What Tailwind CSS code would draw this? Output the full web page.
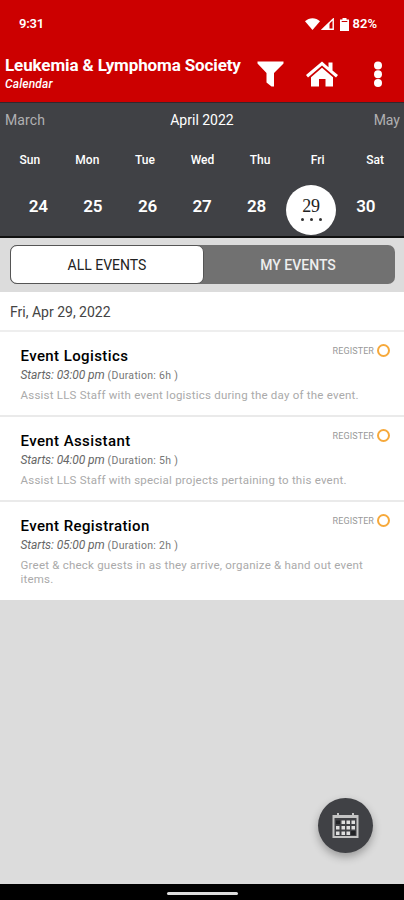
<!DOCTYPE html>
<html lang="en">
  <head>
    <meta charset="UTF-8" />
    <meta name="viewport" content="width=device-width, initial-scale=1.0" />
    <title>Calendar</title>
    <script src="https://cdn.jsdelivr.net/npm/@tailwindcss/browser@4"></script>
  </head>
  <body class="h-[900px] w-[404px] overflow-hidden bg-[#dcdcdc] font-['Roboto',sans-serif] flex flex-col">
    <!-- Header -->
    <header class="h-[102px] bg-[#cc0000] text-white">
      <div class="h-12 pl-[19px] pr-[27px] flex items-center justify-between text-[13px] font-semibold">
        <span class="tracking-[-0.2px]">9:31</span>
        <div class="flex items-center">
          <svg class="w-[15px] h-3" viewBox="0 0 15 12" fill="currentColor"><path d="M0 3.2C4.4-.8 10.600-.8 15 3.200L7.500 12z" /></svg>
          <svg class="w-[13px] h-3 ml-px" viewBox="0 0 13 12"><path d="M12.200 1v10.200H1.500z" fill="none" stroke="currentColor" stroke-width="1.400" /><path d="M8.500 4v7H1.500z" fill="currentColor" /></svg>
          <svg class="w-[9px] h-[13px] ml-[6px]" viewBox="0 0 9 13"><path d="M2.500 0h4v1.500H9V13H0V1.500h2.500z" fill="currentColor" /><path d="M1.700 3.500h5.600" stroke="#cc0000" stroke-width="1" /></svg>
          <span class="ml-[4px]">82%</span>
        </div>
      </div>
      <div class="h-[54px] pl-[5px] flex">
        <div class="w-[252px] pt-[7px]">
          <h1 class="text-[17px] leading-5 font-bold whitespace-nowrap tracking-[-0.12px]">Leukemia &amp; Lymphoma Society</h1>
          <p class="text-xs leading-[18px] font-medium italic tracking-[0.15px]">Calendar</p>
        </div>
        <svg class="w-[27px] h-[26px] mt-[13px]" viewBox="0 0 27 26" fill="currentColor"><path d="M.500.500h26v2L17 12v13.500h-2.500L9.500 21.500V12L.500 2.500z" /></svg>
        <svg class="w-8 h-[26px] mt-[13px] ml-[22px]" viewBox="0 0 32 26" fill="currentColor"><path d="M16 .500l6.500 5.700V1.500h4v8L32 14l-2 2.500L16 4.500 2 16.500 0 14z" /><path d="M16 6.700l11 9.500V25.500h-7.500V18h-6.500v7.500H5V16.200z" /></svg>
        <svg class="w-2 h-[26px] mt-[13px] ml-[36px]" viewBox="0 0 8 26" fill="currentColor"><circle cx="4" cy="4.500" r="4" /><circle cx="4" cy="13.200" r="4" /><circle cx="4" cy="21.900" r="4" /></svg>
      </div>
    </header>

    <!-- Week calendar -->
    <section class="h-[136px] bg-[#404145] border-t border-t-[#33272d] border-b-2 border-b-[#111111] text-white">
      <div class="h-[34px] px-[5px] grid grid-cols-3 items-center text-sm">
        <span class="text-[#b0b0b2] tracking-[0.1px]">March</span>
        <span class="text-center whitespace-nowrap">April 2022</span>
        <span class="text-right text-[#b0b0b2] -mr-px">May</span>
      </div>
      <div class="h-[45px] pl-px grid grid-cols-7 items-center text-center text-xs font-medium">
        <span>Sun</span>
        <span>Mon</span>
        <span>Tue</span>
        <span>Wed</span>
        <span>Thu</span>
        <span>Fri</span>
        <span>Sat</span>
      </div>
      <div class="h-[54px] px-[11px] grid grid-cols-7 text-center text-[17px] leading-[48px] font-semibold tracking-[-0.2px]">
        <span>24</span>
        <span>25</span>
        <span>26</span>
        <span>27</span>
        <span>28</span>
        <div class="relative size-[50px] mt-[3px] mx-auto rounded-full bg-white text-[#222222] font-['Liberation_Serif',serif] font-normal text-[18px] leading-[43px]">
          29
          <div class="absolute inset-x-0 top-[33px] flex justify-center gap-[6px]">
            <i class="size-[3px] rounded-full bg-[#333333]"></i>
            <i class="size-[3px] rounded-full bg-[#333333]"></i>
            <i class="size-[3px] rounded-full bg-[#333333]"></i>
          </div>
        </div>
        <span>30</span>
      </div>
    </section>

    <!-- Tabs -->
    <div class="h-[54px] pt-[7px] pl-[10px] pr-[9px]">
      <div class="h-[39px] flex rounded-[7px] bg-[#717171] text-sm text-center leading-[38px]">
        <button class="w-[194px] rounded-[7px] border border-[#555555] bg-white text-[#222222]">ALL EVENTS</button>
        <button class="flex-1 pr-[3px] text-[#eeeeee] font-medium">MY EVENTS</button>
      </div>
    </div>

    <!-- Events -->
    <main class="bg-white">
      <div class="h-10 pl-[10px] border-b-2 border-[#eeeeee] text-sm leading-[40px] text-[#444444]">Fri, Apr 29, 2022</div>
      <article class="h-[85px] pt-[14px] pl-[20.500px] pr-[14px] border-b-2 border-[#eaeaea]">
        <div class="flex justify-between">
          <h2 class="text-[15px] leading-5 font-medium text-black tracking-[0.4px]">Event Logistics</h2>
          <div class="h-[9px] flex items-center gap-[3px] text-[9px] text-[#999999]"><span class="pt-[2px] tracking-[0.1px]">REGISTER</span> <span class="size-[13px] rounded-full border-2 border-[#f6a93b]"></span></div>
        </div>
        <p class="text-xs leading-[18px] text-[#666666]"><i class="tracking-[-0.1px]">Starts: 03:00 pm</i> <span class="text-[10.500px] text-[#777777] tracking-[0.3px]">(Duration: 6h )</span></p>
        <p class="mt-[3px] text-[11.500px] leading-[14px] text-[#aaaaaa] tracking-[0.22px]">Assist LLS Staff with event logistics during the day of the event.</p>
      </article>
      <article class="h-[85px] pt-[14px] pl-[20.500px] pr-[14px] border-b-2 border-[#eaeaea]">
        <div class="flex justify-between">
          <h2 class="text-[15px] leading-5 font-medium text-black tracking-[0.4px]">Event Assistant</h2>
          <div class="h-[9px] flex items-center gap-[3px] text-[9px] text-[#999999]"><span class="pt-[2px] tracking-[0.1px]">REGISTER</span> <span class="size-[13px] rounded-full border-2 border-[#f6a93b]"></span></div>
        </div>
        <p class="text-xs leading-[18px] text-[#666666]"><i class="tracking-[-0.1px]">Starts: 04:00 pm</i> <span class="text-[10.500px] text-[#777777] tracking-[0.3px]">(Duration: 5h )</span></p>
        <p class="mt-[3px] text-[11.500px] leading-[14px] text-[#aaaaaa] tracking-[0.22px]">Assist LLS Staff with special projects pertaining to this event.</p>
      </article>
      <article class="h-[98px] pt-[14px] pl-[20.500px] pr-[14px]">
        <div class="flex justify-between">
          <h2 class="text-[15px] leading-5 font-medium text-black tracking-[0.4px]">Event Registration</h2>
          <div class="h-[9px] flex items-center gap-[3px] text-[9px] text-[#999999]"><span class="pt-[2px] tracking-[0.1px]">REGISTER</span> <span class="size-[13px] rounded-full border-2 border-[#f6a93b]"></span></div>
        </div>
        <p class="text-xs leading-[18px] text-[#666666]"><i class="tracking-[-0.1px]">Starts: 05:00 pm</i> <span class="text-[10.500px] text-[#777777] tracking-[0.3px]">(Duration: 2h )</span></p>
        <p class="mt-[3px] text-[11.500px] leading-[14px] text-[#aaaaaa] tracking-[0.22px]">Greet &amp; check guests in as they arrive, organize &amp; hand out event<br />items.</p>
      </article>
    </main>

    <!-- Floating calendar button -->
    <button class="absolute left-[318px] top-[798px] size-[55px] rounded-full bg-[#404145] shadow-[0_4px_8px_rgba(0,0,0,0.3)] flex items-center justify-center">
      <svg class="w-[27px] h-[27px]" viewBox="0 0 27 27">
        <path d="M1.500 4h24v21h-24z" fill="none" stroke="#c4c4c4" stroke-width="2" />
        <path d="M1.500 5h24M6 1v4M21 1v4" stroke="#c4c4c4" stroke-width="2" />
        <path d="M9.500 8.500h3.500v3.500h-3.500zM14.500 8.500h3.500v3.500h-3.500zM19.500 8.500h3.500v3.500h-3.500zM4 14h3.500v3.500h-3.500zM9.500 14h3.500v3.500h-3.500zM14.500 14h3.500v3.500h-3.500zM19.500 14h3.500v3.500h-3.500zM4 19.500h3.500v3.500h-3.500zM9.500 19.500h3.500v3.500h-3.500zM14.500 19.500h3.500v3.500h-3.500z" fill="#dedede" />
        <path d="M4 8.500h4v3.500h-4zM19 19h4.500v4h-4.500z" fill="#222326" />
      </svg>
    </button>

    <!-- System navigation bar -->
    <footer class="mt-auto h-4 bg-black flex items-center justify-center">
      <div class="w-[71px] h-[3px] mt-[2px] rounded-full bg-[#dddddd]"></div>
    </footer>
  </body>
</html>
